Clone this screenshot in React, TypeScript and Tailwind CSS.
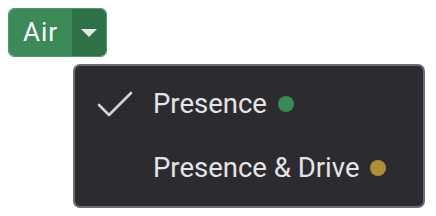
import { useState } from "react";

type Option = {
  label: string;
  dot: string;
};

const options: Option[] = [
  { label: "Presence", dot: "bg-[#3a8a55]" },
  { label: "Presence & Drive", dot: "bg-[#b08f34]" },
];

function CheckIcon() {
  return (
    <svg width="36" height="28" viewBox="0 0 36 28" fill="none" className="text-[#d4d4d6]">
      <path d="M2 15 L12 25 L34 3" stroke="currentColor" strokeWidth="2.6" strokeLinecap="round" strokeLinejoin="round" />
    </svg>
  );
}

export default function App() {
  const [selected, setSelected] = useState(0);

  return (
    <div className="flex min-h-[216px] flex-col bg-white p-2 font-['Roboto',sans-serif]">
      <div className="flex h-[49px] w-[99px] overflow-hidden rounded-[6px] border border-[#4d9c68]">
        <button
          type="button"
          className="flex w-[63px] items-center justify-center bg-[#3b8a57] text-[26px] tracking-[1px] text-white"
        >
          Air
        </button>
        <button
          type="button"
          className="flex flex-1 items-center justify-center bg-[#2f7146]"
        >
          <svg width="16" height="8" viewBox="0 0 16 8">
            <path d="M0 0 H16 L8 8 Z" fill="#e6e6e6" />
          </svg>
        </button>
      </div>

      <div className="ml-[65px] mt-[7px] flex w-[352px] flex-col rounded-[7px] border-2 border-[#6c6c72] bg-[#2c2c30] py-[6px]">
        {options.map((option, i) => (
          <button
            key={option.label}
            type="button"
            onClick={() => setSelected(i)}
            className="flex h-[64px] items-center text-left"
          >
            <span className="flex w-[78px] justify-end pr-[20px]">
              {selected === i ? <CheckIcon /> : null}
            </span>
            <span className="text-[27.5px] text-[#e4e4e6]">{option.label}</span>
            <span className={`ml-[11px] h-[16px] w-[16px] shrink-0 rounded-full ${option.dot}`} />
          </button>
        ))}
      </div>
    </div>
  );
}
